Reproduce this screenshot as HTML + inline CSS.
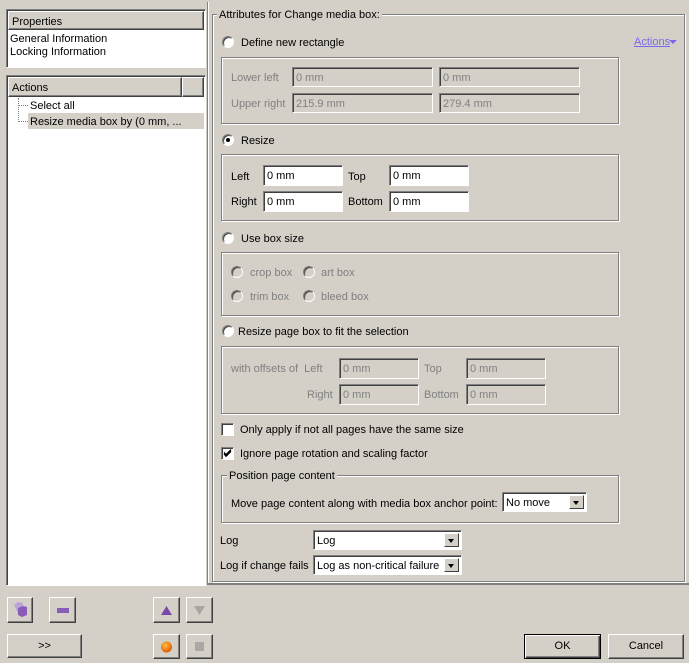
<!DOCTYPE html>
<html><head><style>
*{box-sizing:border-box}
body{margin:0;width:689px;height:663px;background:#d4d0c8;font:11px "Liberation Sans",Tahoma,sans-serif;color:#000;position:relative;overflow:hidden}
.a{position:absolute;white-space:nowrap}
.t{position:absolute;white-space:nowrap;line-height:13px;padding-top:1px}
.g{color:#808080}
.grp{position:absolute;border:1px solid #808080;box-shadow:1px 1px 0 #fff inset,1px 1px 0 #fff}
.in{position:absolute;background:#fff;border:1px solid;border-color:#808080 #fff #fff #808080;box-shadow:inset 1px 1px 0 #404040;padding:4px 0 0 3px;line-height:13px}
.dis{background:#d4d0c8;color:#808080}
.rad{position:absolute;width:12px;height:12px;border-radius:50%;background:#fff;border:1px solid;border-color:#808080 #fff #fff #808080;box-shadow:inset 1px 1px 0 #404040}
.rad.d{background:#d4d0c8}
.rad.on::after{content:"";position:absolute;left:3px;top:3px;width:4px;height:4px;border-radius:50%;background:#000}
.chk{position:absolute;width:13px;height:13px;background:#fff;border:1px solid;border-color:#808080 #fff #fff #808080;box-shadow:inset 1px 1px 0 #404040}
.btn{position:absolute;background:#d4d0c8;border:1px solid;border-color:#fff #404040 #404040 #fff;box-shadow:inset -1px -1px 0 #808080;text-align:center}
.sel{position:absolute;background:#fff;border:1px solid;border-color:#808080 #fff #fff #808080;box-shadow:inset 1px 1px 0 #404040;padding:4px 0 0 3px;line-height:13px}
.sel .ar{position:absolute;right:2px;top:2px;bottom:2px;width:15px;background:#d4d0c8;border:1px solid;border-color:#fff #404040 #404040 #fff}
.sel .ar::after{content:"";position:absolute;left:3px;top:5px;border:3.5px solid transparent;border-top:4px solid #000}
</style></head><body>

<div class="a" style="left:6px;top:9px;width:200px;height:59px;background:#fff;border:1px solid;border-color:#808080 #fff #fff #808080;box-shadow:inset 1px 1px 0 #404040"></div>
<div class="btn" style="left:8px;top:11px;width:196px;height:19px;text-align:left;padding:4px 0 0 3px;line-height:13px">Properties</div>
<div class="t" style="left:10px;top:32px">General Information</div>
<div class="t" style="left:10px;top:45px">Locking Information</div>

<div class="a" style="left:6px;top:75px;width:200px;height:511px;background:#fff;border:1px solid;border-color:#808080 #fff #fff #808080;box-shadow:inset 1px 1px 0 #404040"></div>
<div class="btn" style="left:8px;top:77px;width:174px;height:20px;text-align:left;padding:4px 0 0 3px;line-height:13px">Actions</div>
<div class="btn" style="left:182px;top:77px;width:22px;height:20px"></div>
<div class="a" style="left:28px;top:113px;width:176px;height:16px;background:#d4d0c8"></div>
<div class="a" style="left:18px;top:98px;height:24px;border-left:1px dotted #808080"></div>
<div class="a" style="left:18px;top:105px;width:10px;border-top:1px dotted #808080"></div>
<div class="a" style="left:18px;top:121px;width:10px;border-top:1px dotted #808080"></div>
<div class="t" style="left:30px;top:99px">Select all</div>
<div class="t" style="left:30px;top:115px">Resize media box by (0 mm, ...</div>

<div class="a" style="left:207px;top:2px;width:482px;height:583px;border-left:1px solid #808080;border-bottom:2px solid #808080;box-shadow:inset 1px 0 0 #fff"></div>
<div class="grp" style="left:212px;top:14px;width:473px;height:568px"></div>
<div class="t" style="left:217px;top:8px;background:#d4d0c8;padding:1px 2px 0">Attributes for Change media box:</div>

<div class="t" style="left:634px;top:35px;color:#7b68ee;text-decoration:underline">Actions</div>
<div class="a" style="left:669px;top:40px;border:4px solid transparent;border-top:4px solid #7b68ee"></div>

<div class="rad" style="left:222px;top:36px"></div>
<div class="t" style="left:241px;top:36px">Define new rectangle</div>
<div class="grp" style="left:221px;top:57px;width:398px;height:67px"></div>
<div class="t g" style="left:231px;top:71px">Lower left</div>
<div class="in dis" style="left:292px;top:67px;width:141px;height:20px">0 mm</div>
<div class="in dis" style="left:439px;top:67px;width:141px;height:20px">0 mm</div>
<div class="t g" style="left:231px;top:97px">Upper right</div>
<div class="in dis" style="left:292px;top:93px;width:141px;height:20px">215.9 mm</div>
<div class="in dis" style="left:439px;top:93px;width:141px;height:20px">279.4 mm</div>

<div class="rad on" style="left:222px;top:134px"></div>
<div class="t" style="left:241px;top:134px">Resize</div>
<div class="grp" style="left:221px;top:154px;width:398px;height:67px"></div>
<div class="t" style="left:231px;top:170px">Left</div>
<div class="in" style="left:263px;top:165px;width:80px;height:21px">0 mm</div>
<div class="t" style="left:348px;top:170px">Top</div>
<div class="in" style="left:389px;top:165px;width:80px;height:21px">0 mm</div>
<div class="t" style="left:231px;top:195px">Right</div>
<div class="in" style="left:263px;top:191px;width:80px;height:21px">0 mm</div>
<div class="t" style="left:348px;top:195px">Bottom</div>
<div class="in" style="left:389px;top:191px;width:80px;height:21px">0 mm</div>

<div class="rad" style="left:222px;top:232px"></div>
<div class="t" style="left:241px;top:232px">Use box size</div>
<div class="grp" style="left:221px;top:252px;width:398px;height:64px"></div>
<div class="rad d" style="left:231px;top:266px"></div><div class="t g" style="left:250px;top:266px">crop box</div>
<div class="rad d" style="left:303px;top:266px"></div><div class="t g" style="left:321px;top:266px">art box</div>
<div class="rad d" style="left:231px;top:290px"></div><div class="t g" style="left:250px;top:290px">trim box</div>
<div class="rad d" style="left:303px;top:290px"></div><div class="t g" style="left:321px;top:290px">bleed box</div>

<div class="rad" style="left:222px;top:325px"></div>
<div class="t" style="left:238px;top:325px">Resize page box to fit the selection</div>
<div class="grp" style="left:221px;top:346px;width:398px;height:68px"></div>
<div class="t g" style="left:231px;top:362px">with offsets of&nbsp; Left</div>
<div class="in dis" style="left:339px;top:358px;width:80px;height:21px">0 mm</div>
<div class="t g" style="left:424px;top:362px">Top</div>
<div class="in dis" style="left:466px;top:358px;width:80px;height:21px">0 mm</div>
<div class="t g" style="left:307px;top:388px">Right</div>
<div class="in dis" style="left:339px;top:384px;width:80px;height:21px">0 mm</div>
<div class="t g" style="left:424px;top:388px">Bottom</div>
<div class="in dis" style="left:466px;top:384px;width:80px;height:21px">0 mm</div>

<div class="chk" style="left:221px;top:423px"></div>
<div class="t" style="left:240px;top:423px">Only apply if not all pages have the same size</div>
<div class="chk" style="left:221px;top:447px"><svg width="11" height="11" style="position:absolute;left:0;top:0"><path d="M2 5 L4 7.5 L9 2.5 M2 6 L4 8.5 L9 3.5 M2 4 L4 6.5 L9 1.5" stroke="#000" stroke-width="1" fill="none"/></svg></div>
<div class="t" style="left:240px;top:447px">Ignore page rotation and scaling factor</div>

<div class="grp" style="left:221px;top:475px;width:398px;height:48px"></div>
<div class="t" style="left:227px;top:469px;background:#d4d0c8;padding:1px 2px 0">Position page content</div>
<div class="t" style="left:231px;top:497px">Move page content along with media box anchor point:</div>
<div class="sel" style="left:502px;top:492px;width:85px;height:20px">No move<div class="ar"></div></div>

<div class="t" style="left:220px;top:534px">Log</div>
<div class="sel" style="left:313px;top:530px;width:149px;height:20px">Log<div class="ar"></div></div>
<div class="t" style="left:220px;top:559px">Log if change fails</div>
<div class="sel" style="left:313px;top:555px;width:149px;height:20px">Log as non-critical failure<div class="ar"></div></div>

<div class="btn" style="left:7px;top:597px;width:26px;height:26px"><svg width="24" height="24"><path d="M6 7 L10 4 L15 5 L15 12 L10 15 Z" fill="#b9a6d6"/><path d="M10 10 L15 8 L19 9 L19 17 L14 19 L10 17 Z" fill="#8a5bb8"/></svg></div>
<div class="btn" style="left:49px;top:597px;width:27px;height:26px"><svg width="25" height="24"><rect x="7" y="10" width="12" height="5" fill="#8a5bb8"/></svg></div>
<div class="btn" style="left:153px;top:597px;width:27px;height:26px"><svg width="25" height="24"><path d="M7 17 L12.5 8 L18 17 Z" fill="#7a4aaa"/></svg></div>
<div class="btn" style="left:186px;top:597px;width:27px;height:26px"><svg width="25" height="24"><path d="M7 8 L18 8 L12.5 17 Z" fill="#a8a6a2"/></svg></div>
<div class="btn" style="left:7px;top:634px;width:75px;height:24px;line-height:22px">&gt;&gt;</div>
<div class="btn" style="left:153px;top:634px;width:27px;height:25px"><svg width="25" height="23"><defs><radialGradient id="o" cx="0.4" cy="0.35" r="0.7"><stop offset="0" stop-color="#ffc040"/><stop offset="1" stop-color="#e05000"/></radialGradient></defs><circle cx="12.5" cy="12" r="5.5" fill="url(#o)"/></svg></div>
<div class="btn" style="left:186px;top:634px;width:27px;height:25px"><svg width="25" height="23"><rect x="8" y="7" width="9" height="9" fill="#aaa8a4"/></svg></div>
<div class="btn" style="left:524px;top:634px;width:77px;height:25px;line-height:23px;border:1px solid #000;box-shadow:inset 1px 1px 0 #fff,inset -1px -1px 0 #404040,inset -2px -2px 0 #808080">OK</div>
<div class="btn" style="left:608px;top:634px;width:76px;height:25px;line-height:23px">Cancel</div>
</body></html>
